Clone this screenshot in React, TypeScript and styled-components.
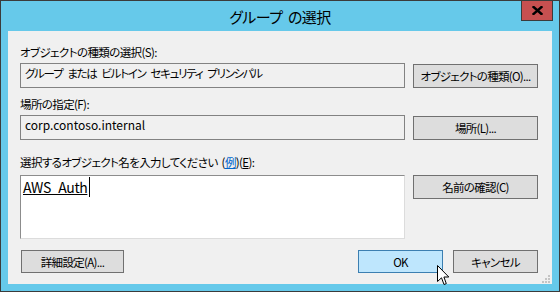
import styled, { createGlobalStyle } from 'styled-components'

const GlobalStyle = createGlobalStyle`
  html, body {
    margin: 0;
    padding: 0;
    background: #ffffff;
  }
  body {
    font-family: 'Noto Sans CJK JP', 'Noto Sans', sans-serif;
    font-feature-settings: 'palt' 1;
    color: #000;
  }
`

const Window = styled.div`
  position: relative;
  width: 560px;
  height: 292px;
  box-sizing: border-box;
  border: 1px solid #3b3b3b;
  background: #66c9ea;
  display: flex;
  flex-direction: column;
`

const TitleBar = styled.div`
  height: 30px;
  flex: none;
  display: grid;
  grid-template-columns: 1fr auto 1fr;
  align-items: center;
`

const Title = styled.div`
  grid-column: 2;
  font-size: 15px;
  line-height: 20px;
  letter-spacing: -0.6px;
  word-spacing: 3px;
  margin-top: 1px;
`

const CloseButton = styled.div`
  grid-column: 3;
  justify-self: end;
  align-self: start;
  margin-right: 6px;
  width: 32px;
  height: 20px;
  box-sizing: border-box;
  background: #c75050;
  border: 1px solid #3b3b3b;
  border-top: none;
  display: flex;
  align-items: center;
  justify-content: center;
`

const Client = styled.div`
  position: relative;
  flex: 1;
  margin: 0 7px 7px;
  background: #f0f0f0;
  padding: 13px 14px 0 12px;
  display: flex;
  flex-direction: column;
`

const Label = styled.div<{ $top: number; $bottom: number }>`
  font-size: 11.5px;
  letter-spacing: -0.6px;
  word-spacing: 2px;
  line-height: 16px;
  margin-top: ${(p) => p.$top}px;
  margin-bottom: ${(p) => p.$bottom}px;
  white-space: nowrap;
`

const Link = styled.span`
  color: #0066cc;
  text-decoration: underline;
`

const Row = styled.div`
  display: grid;
  grid-template-columns: 385px 125px;
  column-gap: 8px;
  align-items: start;
`

const ReadBox = styled.div<{ $latin?: boolean }>`
  height: 25px;
  box-sizing: border-box;
  border: 1px solid #828282;
  background: #f0f0f0;
  padding: 1px 4px;
  font-size: ${(p) => (p.$latin ? 12 : 11.5)}px;
  letter-spacing: ${(p) => (p.$latin ? 0 : -1.25)}px;
  word-spacing: ${(p) => (p.$latin ? 0 : 3.5)}px;
  line-height: 16px;
  white-space: nowrap;
`

const EditBox = styled.div`
  height: 64px;
  box-sizing: border-box;
  border: 1px solid;
  border-color: #8c8c8c #dcdcdc #dcdcdc #8c8c8c;
  background: #ffffff;
  padding: 0 2px;
  display: flex;
  align-items: flex-start;
`

const EntryText = styled.span`
  font-size: 14px;
  letter-spacing: -0.4px;
  line-height: 20px;
  margin-top: 1px;
  text-decoration: underline;
  text-underline-offset: 1px;
`

const Caret = styled.span`
  width: 1px;
  height: 20px;
  margin-top: 1px;
  margin-left: 2px;
  background: #000;
`

const Button = styled.div<{ $width?: number; $height?: number; $default?: boolean; $offset?: number }>`
  width: ${(p) => (p.$width ? `${p.$width}px` : 'auto')};
  height: ${(p) => p.$height ?? 24}px;
  margin-top: ${(p) => p.$offset ?? 0}px;
  box-sizing: border-box;
  border: 1px solid ${(p) => (p.$default ? '#3c7fb1' : '#707070')};
  background: ${(p) => (p.$default ? '#bee6fd' : '#dddddd')};
  display: flex;
  align-items: center;
  justify-content: center;
  font-size: 11.5px;
  letter-spacing: -0.7px;
  line-height: 16px;
  white-space: nowrap;
`

const Footer = styled.div`
  display: flex;
  align-items: center;
  margin-top: 11px;
  margin-left: 1px;
  gap: 10px;
`

const Spacer = styled.div`
  flex: 1;
`

const Grip = styled.svg`
  position: absolute;
  right: 2px;
  bottom: 1px;
`

const Pointer = styled.svg`
  position: absolute;
  left: 436px;
  top: 264px;
`

export default function App() {
  return (
    <>
      <GlobalStyle />
      <Window>
        <TitleBar>
          <Title>グループ の選択</Title>
          <CloseButton>
            <svg width="11" height="9" viewBox="0 0 11 9">
              <path d="M1.5 1 L9.5 8 M9.5 1 L1.5 8" stroke="#000" strokeWidth="2.4" strokeLinecap="square" />
            </svg>
          </CloseButton>
        </TitleBar>
        <Client>
          <Label $top={0} $bottom={3}>オブジェクトの種類の選択(S):</Label>
          <Row>
            <ReadBox>グループ または ビルトイン セキュリティ プリンシパル</ReadBox>
            <Button $offset={1}>オブジェクトの種類(O)...</Button>
          </Row>
          <Label $top={8} $bottom={3}>場所の指定(F):</Label>
          <Row>
            <ReadBox $latin>corp.contoso.internal</ReadBox>
            <Button $offset={1}>場所(L)...</Button>
          </Row>
          <Label $top={14} $bottom={5}>
            選択するオブジェクト名を入力してください (<Link>例</Link>)(<u>E</u>):
          </Label>
          <Row>
            <EditBox>
              <EntryText>AWS_Auth</EntryText>
              <Caret />
            </EditBox>
            <Button>名前の確認(C)</Button>
          </Row>
          <Footer>
            <Button $width={103} $height={23}>詳細設定(A)...</Button>
            <Spacer />
            <Button $width={85} $height={23} $default>OK</Button>
            <Button $width={85} $height={23}>キャンセル</Button>
          </Footer>
          <Grip width="8" height="8" viewBox="0 0 8 8">
            <rect x="6" y="0" width="2" height="2" fill="#c4c4c4" />
            <rect x="3" y="3" width="2" height="2" fill="#c4c4c4" />
            <rect x="6" y="3" width="2" height="2" fill="#c4c4c4" />
            <rect x="0" y="6" width="2" height="2" fill="#c4c4c4" />
            <rect x="3" y="6" width="2" height="2" fill="#c4c4c4" />
            <rect x="6" y="6" width="2" height="2" fill="#c4c4c4" />
          </Grip>
        </Client>
        <Pointer width="13" height="21" viewBox="0 0 13 21">
          <path d="M0.5 0.5 L0.5 16.5 L4.5 12.8 L7 19.5 L9.3 18.6 L6.9 12 L11.8 12 Z" fill="#fff" stroke="#000" strokeWidth="1" strokeLinejoin="miter" />
        </Pointer>
      </Window>
    </>
  )
}
